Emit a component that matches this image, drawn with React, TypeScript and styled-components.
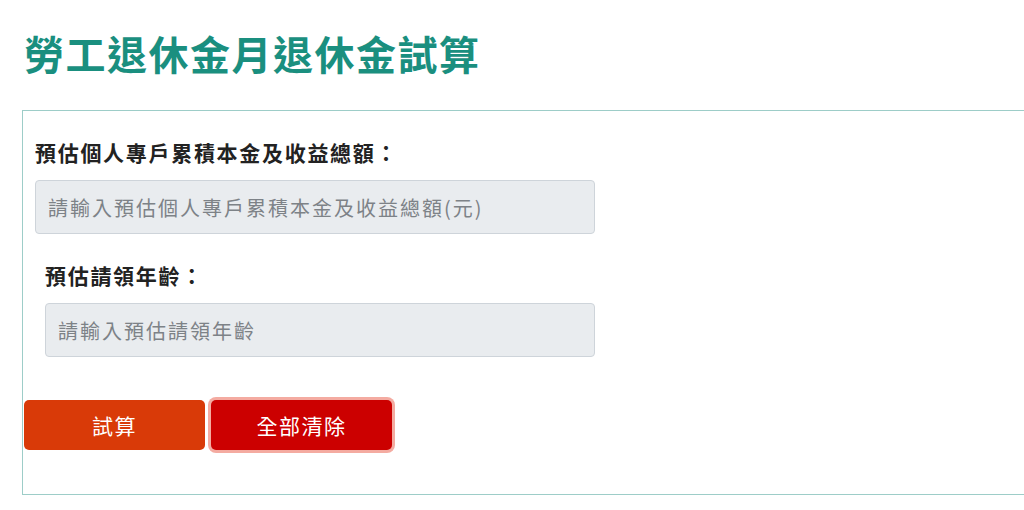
import React from "react";
import styled, { createGlobalStyle } from "styled-components";

const GlobalStyle = createGlobalStyle`
  html, body {
    margin: 0;
    padding: 0;
    background: #fff;
    overflow: hidden;
  }
  body {
    font-family: "Noto Sans CJK TC", "Noto Sans", sans-serif;
    color: #212529;
  }
`;

const Page = styled.div`
  padding: 31px 0 0 22px;
`;

const Title = styled.h1`
  margin: 0 0 35px 2px;
  font-size: 40px;
  line-height: 44px;
  font-weight: 700;
  letter-spacing: 1.5px;
  color: #1a8f7f;
`;

const Card = styled.form`
  width: 1040px;
  border: 1px solid #9dcdc8;
  padding: 26px 0 44px 0;
  box-sizing: border-box;
`;

const Field = styled.div<{ $indent?: number }>`
  display: flex;
  flex-direction: column;
  padding-left: ${(p) => 12 + (p.$indent ?? 0)}px;
  width: ${(p) => 560 - (p.$indent ?? 0)}px;
  & + & {
    margin-top: 26px;
  }
`;

const Label = styled.label`
  font-size: 21px;
  line-height: 31px;
  font-weight: 700;
  letter-spacing: 1.7px;
  color: #222;
  margin-bottom: 12px;
`;

const Input = styled.input`
  height: 54px;
  box-sizing: border-box;
  border: 1px solid #ced4da;
  border-radius: 4px;
  background: #e9ecef;
  padding: 0 12px;
  font-family: inherit;
  font-size: 20px;
  letter-spacing: 2px;
  color: #495057;
  outline: none;
  &::placeholder {
    color: #7d8287;
  }
`;

const Actions = styled.div`
  display: flex;
  gap: 6px;
  margin-top: 43px;
  padding-left: 1px;
`;

const Button = styled.button<{ $variant: "calc" | "clear" }>`
  width: 181px;
  height: 50px;
  border: none;
  border-radius: 5px;
  font-family: inherit;
  font-size: 21px;
  letter-spacing: 1.5px;
  color: #fff;
  cursor: pointer;
  background: ${(p) => (p.$variant === "calc" ? "#d93a08" : "#cc0000")};
  box-shadow: ${(p) =>
    p.$variant === "clear" ? "0 0 0 3px #f4aba1" : "none"};
`;

export default function App() {
  return (
    <>
      <GlobalStyle />
      <Page>
        <Title>勞工退休金月退休金試算</Title>
        <Card onSubmit={(e) => e.preventDefault()}>
          <Field>
            <Label>預估個人專戶累積本金及收益總額：</Label>
            <Input placeholder="請輸入預估個人專戶累積本金及收益總額(元)" />
          </Field>
          <Field $indent={10}>
            <Label>預估請領年齡：</Label>
            <Input placeholder="請輸入預估請領年齡" />
          </Field>
          <Actions>
            <Button type="button" $variant="calc">試算</Button>
            <Button type="button" $variant="clear">全部清除</Button>
          </Actions>
        </Card>
      </Page>
    </>
  );
}
